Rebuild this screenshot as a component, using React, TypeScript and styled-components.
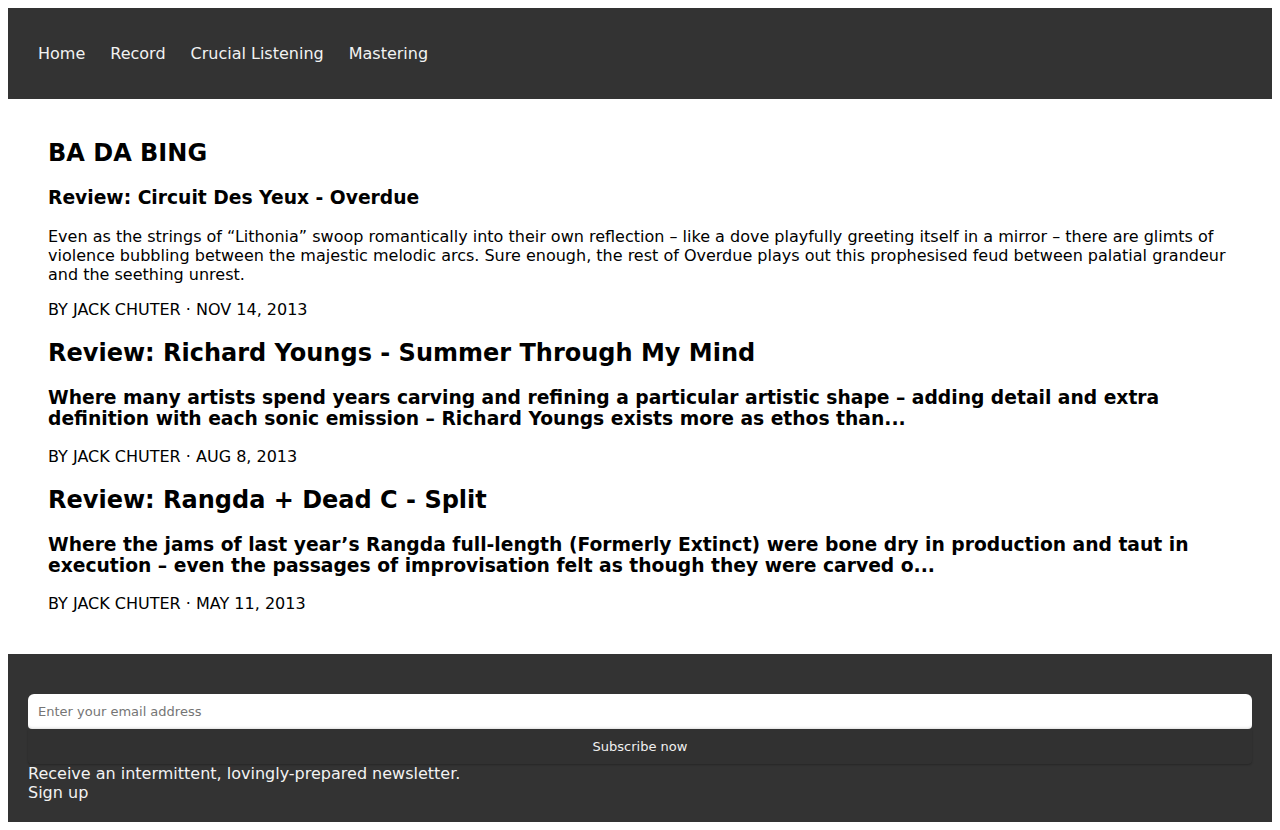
import styled, { createGlobalStyle } from "styled-components";

const GlobalStyle = createGlobalStyle`
  body {
    margin: 8px;
    font-family: "DejaVu Sans", Verdana, sans-serif;
    color: #000;
    background: #fff;
  }
`;

interface Review {
  title: string;
  summary: string;
  date: string;
  lead?: boolean;
}

const reviews: Review[] = [
  {
    title: "Review: Circuit Des Yeux - Overdue",
    summary:
      "Even as the strings of \u201cLithonia\u201d swoop romantically into their own reflection \u2013 like a dove playfully greeting itself in a mirror \u2013 there are glimts of violence bubbling between the majestic melodic arcs. Sure enough, the rest of Overdue plays out this prophesised feud between palatial grandeur and the seething unrest.",
    date: "NOV 14, 2013",
    lead: true,
  },
  {
    title: "Review: Richard Youngs - Summer Through My Mind",
    summary:
      "Where many artists spend years carving and refining a particular artistic shape \u2013 adding detail and extra definition with each sonic emission \u2013 Richard Youngs exists more as ethos than...",
    date: "AUG 8, 2013",
  },
  {
    title: "Review: Rangda + Dead C - Split",
    summary:
      "Where the jams of last year\u2019s Rangda full-length (Formerly Extinct) were bone dry in production and taut in execution \u2013 even the passages of improvisation felt as though they were carved o...",
    date: "MAY 11, 2013",
  },
];

export default function App() {
  return (
    <>
      <GlobalStyle />
      <Header>
        <Nav>
          <NavLink href="#">Home</NavLink>
          <NavLink href="#">Record</NavLink>
          <NavLink href="#">Crucial Listening</NavLink>
          <NavLink href="#">Mastering</NavLink>
        </Nav>
      </Header>
      <Main>
        <SiteTitle>BA DA BING</SiteTitle>
        {reviews.map((r) => (
          <Article key={r.title}>
            {r.lead ? (
              <>
                <SmallTitle>{r.title}</SmallTitle>
                <Summary>{r.summary}</Summary>
              </>
            ) : (
              <>
                <BigTitle>{r.title}</BigTitle>
                <BoldSummary>{r.summary}</BoldSummary>
              </>
            )}
            <Meta>BY JACK CHUTER · {r.date}</Meta>
          </Article>
        ))}
      </Main>
      <Footer>
        <EmailInput placeholder="Enter your email address" />
        <SubscribeButton>Subscribe now</SubscribeButton>
        <FooterText>
          Receive an intermittent, lovingly-prepared newsletter.
          <br />
          Sign up
        </FooterText>
      </Footer>
    </>
  );
}

const Header = styled.header`
  background: #333333;
  padding: 36px 30px;
`;

const Nav = styled.nav`
  display: flex;
  gap: 25px;
  line-height: 19px;
`;

const NavLink = styled.a`
  color: #f2f2f2;
  font-size: 16px;
  text-decoration: none;
`;

const Main = styled.main`
  padding: 20px 40px 25px;
`;

const SiteTitle = styled.h2`
  font-size: 24px;
  margin: 20px 0;
  line-height: 28px;
`;

const Article = styled.article``;

const BigTitle = styled.h2`
  font-size: 24px;
  margin: 20px 0;
  line-height: 28px;
`;

const SmallTitle = styled.h3`
  font-size: 18.72px;
  margin: 19px 0 18px;
  line-height: 22px;
`;

const Summary = styled.p`
  font-size: 16px;
  line-height: 19px;
  margin: 18px 0 16px;
`;

const BoldSummary = styled.h3`
  font-size: 18.72px;
  line-height: 21px;
  margin: 19px 0 18px;
`;

const Meta = styled.p`
  font-size: 16px;
  line-height: 19px;
  margin: 16px 0;
`;

const Footer = styled.footer`
  background: #333333;
  padding: 40px 20px 20px;
  display: flex;
  flex-direction: column;
`;

const EmailInput = styled.input`
  box-sizing: border-box;
  height: 35px;
  width: 100%;
  border: none;
  border-radius: 6px 6px 4px 4px;
  padding: 0 10px;
  font-family: "DejaVu Sans", Verdana, sans-serif;
  font-size: 13px;
  color: #333;
  background: #fff;
  box-shadow: inset 0 -3px 3px -2px rgba(0, 0, 0, 0.12);
  outline: none;

  &::placeholder {
    color: #757575;
  }
`;

const SubscribeButton = styled.button`
  height: 35px;
  width: 100%;
  border: none;
  border-radius: 0 0 4px 4px;
  background: #313131;
  color: #f0f0f0;
  font-family: "DejaVu Sans", Verdana, sans-serif;
  font-size: 13px;
  box-shadow: 0 1px 2px rgba(0, 0, 0, 0.25);
  cursor: pointer;
`;

const FooterText = styled.div`
  color: #f2f2f2;
  font-size: 16px;
  line-height: 19px;
`;
